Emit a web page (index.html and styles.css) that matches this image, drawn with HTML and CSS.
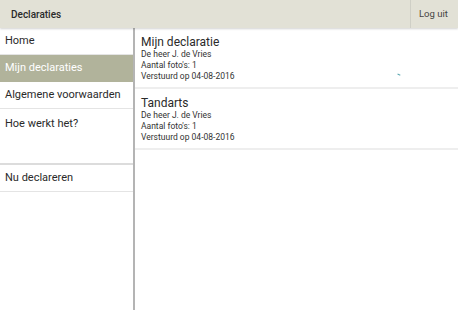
FILE: index.html
```html
<!DOCTYPE html>
<html lang="nl">
<head>
    <meta charset="UTF-8">
    <title>Declaraties</title>
    <link rel="stylesheet" href="styles.css">
</head>
<body>
    <div class="topbar">
        <div class="title">Declaraties</div>
        <div class="logout">Log uit</div>
    </div>

    <div class="main">
        <div class="sidebar">
            <div class="item">Home</div>
            <div class="item active">Mijn declaraties</div>
            <div class="item">Algemene voorwaarden</div>
            <div class="item tall">Hoe werkt het?</div>
            <div class="item">Nu declareren</div>
        </div>

        <div class="content">
            <div class="card">
                <div class="card-title">Mijn declaratie</div>
                <div class="card-line">De heer J. de Vries</div>
                <div class="card-line">Aantal foto's: 1</div>
                <div class="card-line">Verstuurd op 04-08-2016</div>
                <span class="mark"></span>
            </div>
            <div class="card">
                <div class="card-title">Tandarts</div>
                <div class="card-line">De heer J. de Vries</div>
                <div class="card-line">Aantal foto's: 1</div>
                <div class="card-line">Verstuurd op 04-08-2016</div>
            </div>
        </div>
    </div>
</body>
</html>
```

FILE: styles.css
```css
body {
    margin: 0;
    font-family: Roboto, "Liberation Sans", sans-serif;
    background: #ffffff;
    color: #222;
    height: 310px;
    overflow: hidden;
}

.topbar {
    height: 28px;
    background: #e2e1d6;
    display: flex;
    align-items: center;
    justify-content: space-between;
    box-shadow: 0 1px 2px rgba(0, 0, 0, 0.18);
    position: relative;
    z-index: 2;
}

.title {
    font-size: 10px;
    font-weight: 500;
    padding-left: 11px;
    color: #2a2a2a;
}

.logout {
    height: 28px;
    line-height: 28px;
    border-left: 1px solid #cfcfc6;
    width: 39px;
    padding-left: 8px;
    font-size: 9.5px;
    color: #444;
}

.main {
    display: flex;
    height: 282px;
}

.sidebar {
    width: 133px;
    border-right: 2px solid #b4b4b4;
    font-size: 11px;
}

.item {
    height: 26px;
    line-height: 26px;
    padding-left: 5px;
    border-bottom: 1px solid #e4e4e4;
    color: #2a2a2a;
}

.item.active {
    background: #b1b39b;
    color: #fff;
    border-bottom-color: #b1b39b;
}

.item.tall {
    height: 54px;
    line-height: 29px;
    border-bottom: 2px solid #dcdcdc;
}

.content {
    flex: 1;
}

.card {
    position: relative;
    padding: 7px 6px 6px 6px;
    height: 46px;
    border-bottom: 2px solid #eeeeee;
}

.card-title {
    font-size: 12px;
    line-height: 14px;
    color: #2a2a2a;
}

.card-line {
    font-size: 8.5px;
    line-height: 11px;
    color: #333;
}

.mark {
    position: absolute;
    left: 262px;
    top: 46px;
    width: 3px;
    height: 2px;
    border-top: 1px solid #5aa6b0;
    transform: rotate(25deg);
}
```
